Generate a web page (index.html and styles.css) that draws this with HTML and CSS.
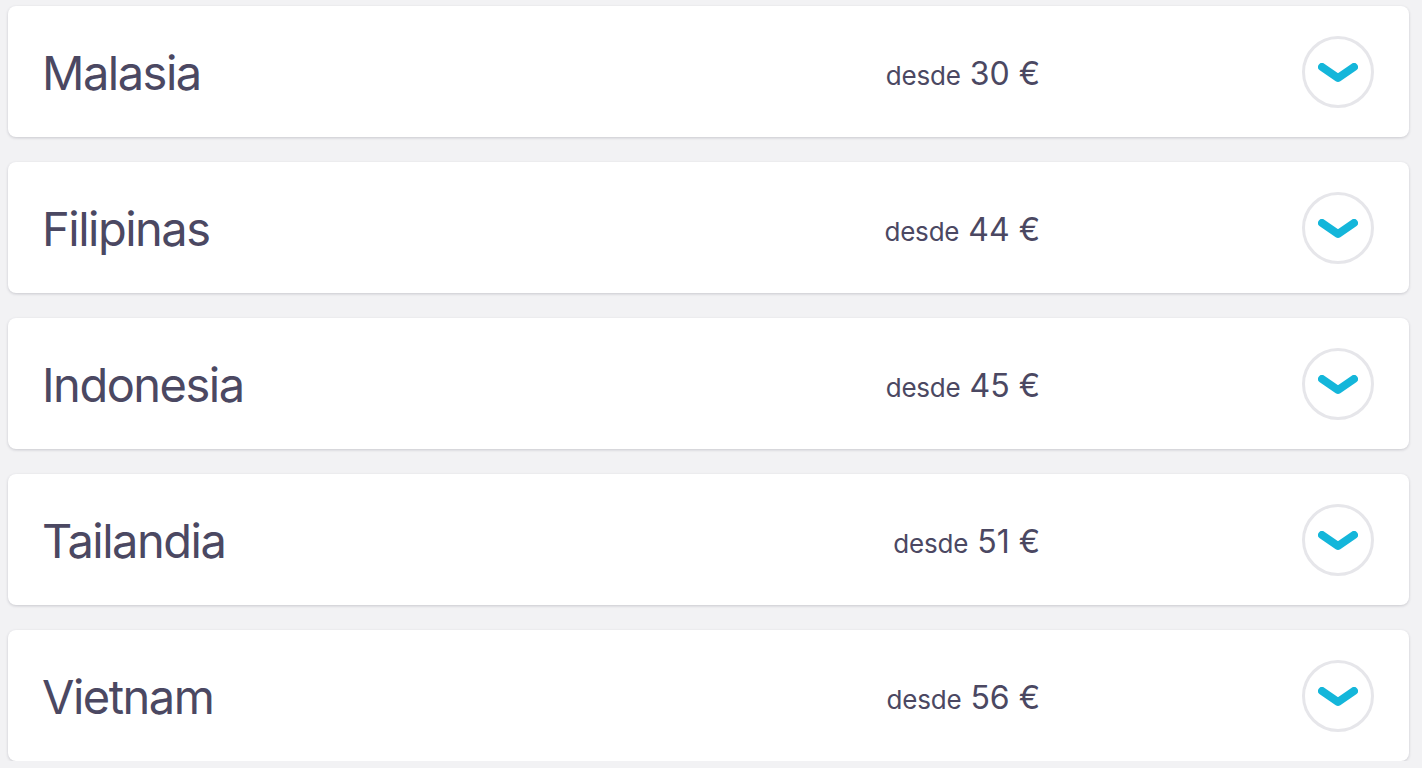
FILE: index.html
```html
<!DOCTYPE html>
<html lang="es">
<head>
<meta charset="utf-8">
<title>Destinos</title>
<link rel="stylesheet" href="styles.css">
</head>
<body>
<div class="list">
  <div class="card">
    <div class="name">Malasia</div>
    <div class="price"><span class="from">desde</span><span class="amount">30 €</span></div>
    <div class="toggle"><svg viewBox="0 0 40 20" width="40" height="20"><path d="M4 4 L20 15 L36 4" fill="none" stroke="#14b6da" stroke-width="8" stroke-linecap="round" stroke-linejoin="round"/></svg></div>
  </div>
  <div class="card">
    <div class="name">Filipinas</div>
    <div class="price"><span class="from">desde</span><span class="amount">44 €</span></div>
    <div class="toggle"><svg viewBox="0 0 40 20" width="40" height="20"><path d="M4 4 L20 15 L36 4" fill="none" stroke="#14b6da" stroke-width="8" stroke-linecap="round" stroke-linejoin="round"/></svg></div>
  </div>
  <div class="card">
    <div class="name">Indonesia</div>
    <div class="price"><span class="from">desde</span><span class="amount">45 €</span></div>
    <div class="toggle"><svg viewBox="0 0 40 20" width="40" height="20"><path d="M4 4 L20 15 L36 4" fill="none" stroke="#14b6da" stroke-width="8" stroke-linecap="round" stroke-linejoin="round"/></svg></div>
  </div>
  <div class="card">
    <div class="name">Tailandia</div>
    <div class="price"><span class="from">desde</span><span class="amount">51 €</span></div>
    <div class="toggle"><svg viewBox="0 0 40 20" width="40" height="20"><path d="M4 4 L20 15 L36 4" fill="none" stroke="#14b6da" stroke-width="8" stroke-linecap="round" stroke-linejoin="round"/></svg></div>
  </div>
  <div class="card">
    <div class="name">Vietnam</div>
    <div class="price"><span class="from">desde</span><span class="amount">56 €</span></div>
    <div class="toggle"><svg viewBox="0 0 40 20" width="40" height="20"><path d="M4 4 L20 15 L36 4" fill="none" stroke="#14b6da" stroke-width="8" stroke-linecap="round" stroke-linejoin="round"/></svg></div>
  </div>
</div>
</body>
</html>
```
FILE: styles.css
```css
html, body {
  margin: 0;
  padding: 0;
  background: #f2f2f4;
}
body {
  font-family: Inter, "Noto Sans", sans-serif;
  color: #4b4862;
}
.list {
  display: flex;
  flex-direction: column;
  gap: 25px;
  padding: 6px 13px 0 8px;
}
.card {
  height: 131px;
  box-sizing: border-box;
  background: #fff;
  border-radius: 8px;
  box-shadow: 0 1px 3px rgba(40, 40, 60, 0.2);
  display: flex;
  align-items: center;
  padding: 0 35px 0 34px;
}
.name {
  flex: 1;
  font-size: 47px;
  letter-spacing: -1.5px;
  margin-top: 2px;
}
.price {
  margin-right: 262px;
  white-space: nowrap;
  margin-top: 3px;
}
.from {
  font-size: 26px;
  letter-spacing: -0.2px;
}
.amount {
  font-size: 32px;
  margin-left: 9px;
}
.toggle {
  width: 72px;
  height: 72px;
  box-sizing: border-box;
  border: 3px solid #e6e6ea;
  border-radius: 50%;
  display: flex;
  align-items: center;
  justify-content: center;
}
.toggle svg {
  display: block;
  margin-top: 2px;
}
```
